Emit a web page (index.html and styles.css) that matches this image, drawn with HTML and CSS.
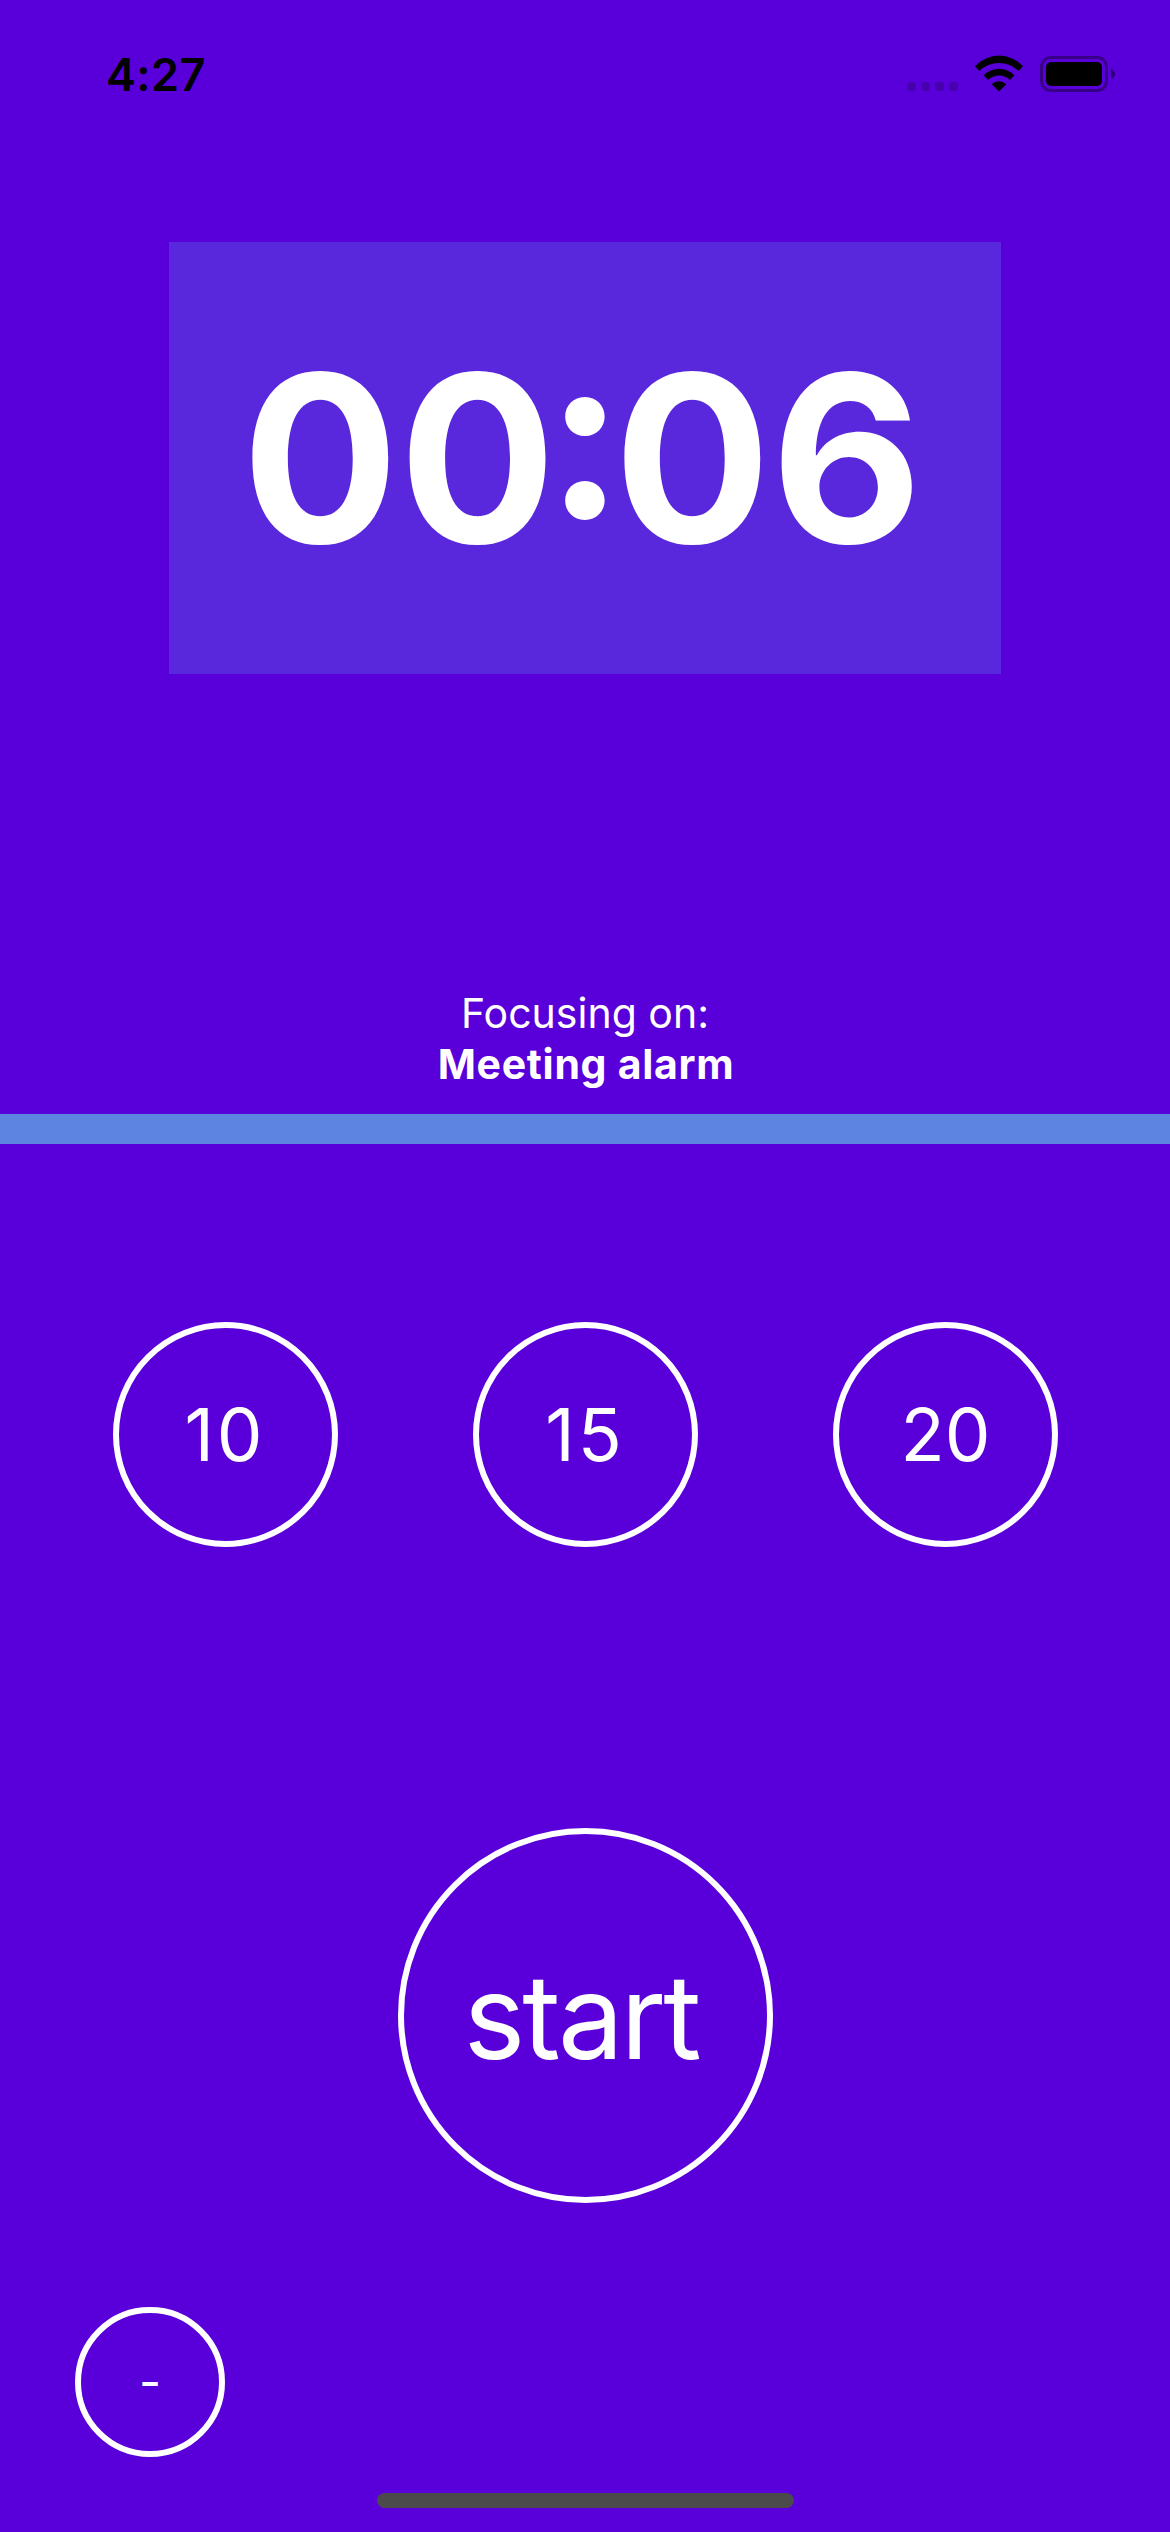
FILE: index.html
```html
<!DOCTYPE html>
<html lang="en">
<head>
<meta charset="utf-8">
<title>Focus Time</title>
<link rel="stylesheet" href="styles.css">
</head>
<body>
<div class="screen">
  <header class="status-bar">
    <span class="clock">4:27</span>
    <div class="indicators">
      <div class="signal"><i></i><i></i><i></i><i></i></div>
      <svg class="wifi" width="48" height="37" viewBox="0 0 48 37">
        <path d="M0 11.2A32.5 32.5 0 0 1 48 11.2L43.6 16A28 28 0 0 0 4.4 16Z"/>
        <path d="M8.7 20.2A21.5 21.5 0 0 1 39.3 20.2L35 25A15.6 15.6 0 0 0 13 25Z"/>
        <path d="M16.7 29.2A10.5 10.5 0 0 1 31.3 29.2L24 36.6Z"/>
      </svg>
      <svg class="battery" width="76" height="36" viewBox="0 0 76 36">
        <rect x="1.5" y="1.5" width="65" height="33" rx="9.5" fill="none" stroke="#000" stroke-opacity=".38" stroke-width="3"/>
        <rect x="6" y="6" width="56" height="24" rx="5"/>
        <path d="M71 12.500C73.400 13.400 75 15.500 75 18C75 20.500 73.400 22.600 71 23.500Z" fill-opacity=".45"/>
      </svg>
    </div>
  </header>

  <main>
    <section class="countdown">
      <div class="time">0<span class="tight">0:</span>06</div>
    </section>
    <section class="task">
      <p class="task-label">Focusing on:</p>
      <p class="task-name">Meeting alarm</p>
    </section>
    <div class="progress"></div>
    <section class="presets">
      <button class="round narrow">10</button>
      <button class="round narrow">15</button>
      <button class="round">20</button>
    </section>
    <section class="controls">
      <button class="round large"><span>start</span></button>
    </section>
    <section class="clear">
      <button class="round small">-</button>
    </section>
  </main>

  <div class="home-indicator"></div>
</div>
</body>
</html>
```
FILE: styles.css
```css
* {
  box-sizing: border-box;
}

body {
  margin: 0;
  background: #5900da;
  color: #fff;
  font-family: Inter, "Liberation Sans", sans-serif;
}

.screen {
  display: flex;
  flex-direction: column;
  width: 1170px;
  height: 2532px;
  overflow: hidden;
}

.status-bar {
  display: flex;
  justify-content: space-between;
  height: 242px;
  padding: 55px 54px 0 106px;
  color: #000;
}

.clock {
  height: 40px;
  font-size: 45px;
  font-weight: 600;
  line-height: 40px;
  letter-spacing: 0.4px;
}

.indicators {
  display: flex;
  align-items: flex-start;
}

.signal {
  display: flex;
  gap: 5px;
  margin: 27px 17px 0 0;
}

.signal i {
  width: 9px;
  height: 9px;
  border-radius: 3px;
  background: rgba(0, 0, 0, 0.2);
}

.wifi {
  margin-right: 17px;
}

.battery {
  margin-top: 1px;
}

main {
  display: flex;
  flex-direction: column;
  flex: 1;
}

.countdown {
  display: flex;
  align-items: center;
  justify-content: center;
  width: 832px;
  height: 432px;
  margin: 0 auto;
  padding: 2px 6px 0 0;
  background: rgba(94, 132, 226, 0.3);
}

.time {
  font-size: 233px;
  font-weight: 700;
  line-height: 1.2;
}

.tight {
  letter-spacing: -10px;
  font-feature-settings: "case" 1;
}

.task {
  height: 440px;
  padding-top: 314px;
  text-align: center;
}

.task p {
  margin: 0;
  line-height: 51px;
}

.task-label {
  font-size: 41px;
}

.task-name {
  padding-left: 2px;
  font-size: 41px;
  font-weight: 700;
  letter-spacing: 0.7px;
}

.progress {
  height: 30px;
  background: #5e84e2;
}

.presets {
  display: flex;
  justify-content: space-between;
  padding: 178px 112px 0 113px;
}

.round {
  display: flex;
  align-items: center;
  justify-content: center;
  width: 225px;
  height: 225px;
  padding: 0;
  border: 6px solid #fff;
  border-radius: 50%;
  background: none;
  color: inherit;
  font-family: inherit;
  font-size: 72.5px;
  line-height: 1.2;
}

.narrow {
  padding-right: 1px;
  letter-spacing: 3px;
}

.controls {
  padding: 281px 0 0 398px;
}

.large {
  width: 375px;
  height: 375px;
  padding: 3px 9px 0 0;
  font-size: 117px;
  letter-spacing: -3.1px;
}

.clear {
  padding: 104px 0 0 75px;
}

.small {
  width: 150px;
  height: 150px;
  font-size: 48px;
}

.home-indicator {
  width: 417px;
  height: 15px;
  margin: 0 0 24px 377px;
  border-radius: 8px;
  background: #4b4b4b;
}
```
